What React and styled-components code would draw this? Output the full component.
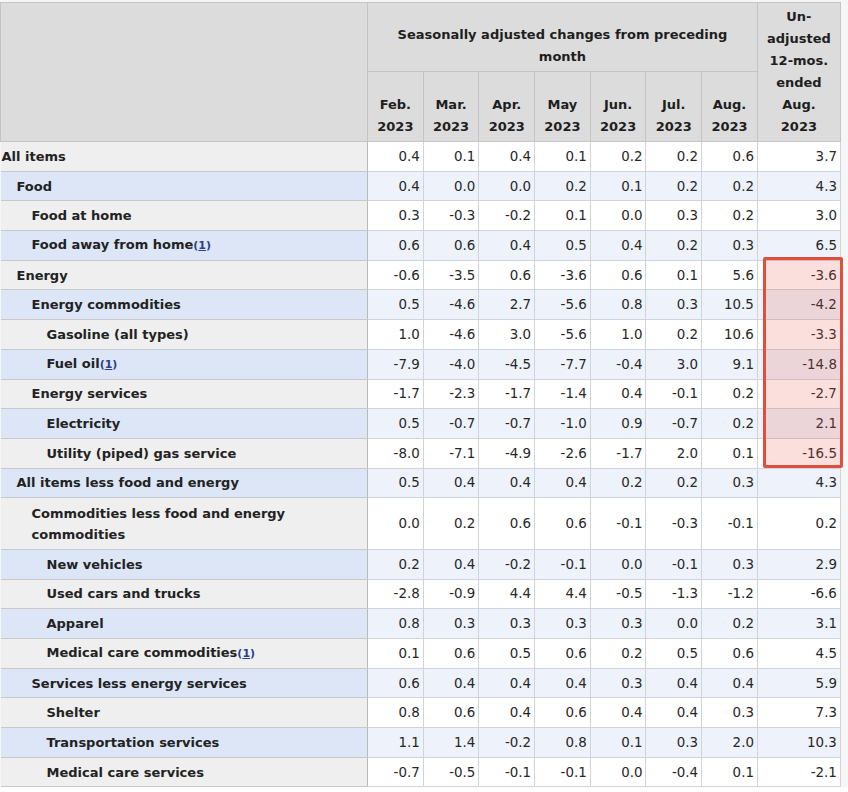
import React from "react";
import styled, { createGlobalStyle } from "styled-components";

const Global = createGlobalStyle`
  html, body { margin: 0; padding: 0; background: #ffffff; }
  body { font-family: "DejaVu Sans", Verdana, sans-serif; }
`;

const Wrap = styled.div`
  position: relative;
  width: 848px;
  padding-top: 2px;
  background: #f6f6f6;
`;

const Table = styled.table`
  border-collapse: collapse;
  table-layout: fixed;
  width: 840px;
  font-size: 13px;
  border-top: 1px solid #c9c9c9;
`;

const HeadCell = styled.th`
  background: #dcdcdc;
  color: #1e1e1e;
  font-weight: bold;
  font-size: 13px;
  line-height: 22px;
  text-align: center;
  vertical-align: bottom;
  padding: 0 2px 3px;
  border: 1px solid #c4c4c4;
  height: ${(p) => p.$h || "auto"};
`;

const Row = styled.tr`
  height: ${(p) => (p.$tall ? "51.7px" : "29.7px")};
`;

const Label = styled.th`
  text-align: left;
  font-weight: bold;
  color: #222;
  font-size: 13px;
  line-height: 21px;
  padding: 0 4px 0 ${(p) => 1 + p.$level * 15}px;
  background: ${(p) => (p.$alt ? "#dce6f7" : "#efefef")};
  border-top: 1px solid #c6c8cc;
  border-bottom: 1px solid #c6c8cc;
  border-right: 1px solid #b9b9b9;
  vertical-align: middle;
`;

const Value = styled.td`
  text-align: right;
  color: #262626;
  font-size: 13.4px;
  padding: 0 3px 0 0;
  background: ${(p) => (p.$alt ? "#eef3fb" : "#ffffff")};
  border: 1px solid #d0d4da;
  vertical-align: middle;
`;

const Foot = styled.span`
  font-size: 11px;
  font-weight: bold;
  color: #2d3e8c;
`;

const FootNum = styled.span`
  text-decoration: underline;
`;

const Highlight = styled.div`
  position: absolute;
  left: 763px;
  top: 257px;
  width: 74px;
  height: 205px;
  border: 3px solid #df4f3d;
  border-radius: 2px;
  background: rgba(232, 96, 80, 0.2);
  pointer-events: none;
`;

const months = ["Feb.", "Mar.", "Apr.", "May", "Jun.", "Jul.", "Aug."];

const rows = [
  [0, "All items", [0.4, 0.1, 0.4, 0.1, 0.2, 0.2, 0.6, 3.7]],
  [1, "Food", [0.4, 0.0, 0.0, 0.2, 0.1, 0.2, 0.2, 4.3]],
  [2, "Food at home", [0.3, -0.3, -0.2, 0.1, 0.0, 0.3, 0.2, 3.0]],
  [2, "Food away from home", [0.6, 0.6, 0.4, 0.5, 0.4, 0.2, 0.3, 6.5], true],
  [1, "Energy", [-0.6, -3.5, 0.6, -3.6, 0.6, 0.1, 5.6, -3.6]],
  [2, "Energy commodities", [0.5, -4.6, 2.7, -5.6, 0.8, 0.3, 10.5, -4.2]],
  [3, "Gasoline (all types)", [1.0, -4.6, 3.0, -5.6, 1.0, 0.2, 10.6, -3.3]],
  [3, "Fuel oil", [-7.9, -4.0, -4.5, -7.7, -0.4, 3.0, 9.1, -14.8], true],
  [2, "Energy services", [-1.7, -2.3, -1.7, -1.4, 0.4, -0.1, 0.2, -2.7]],
  [3, "Electricity", [0.5, -0.7, -0.7, -1.0, 0.9, -0.7, 0.2, 2.1]],
  [3, "Utility (piped) gas service", [-8.0, -7.1, -4.9, -2.6, -1.7, 2.0, 0.1, -16.5]],
  [1, "All items less food and energy", [0.5, 0.4, 0.4, 0.4, 0.2, 0.2, 0.3, 4.3]],
  [2, "Commodities less food and energy|commodities", [0.0, 0.2, 0.6, 0.6, -0.1, -0.3, -0.1, 0.2]],
  [3, "New vehicles", [0.2, 0.4, -0.2, -0.1, 0.0, -0.1, 0.3, 2.9]],
  [3, "Used cars and trucks", [-2.8, -0.9, 4.4, 4.4, -0.5, -1.3, -1.2, -6.6]],
  [3, "Apparel", [0.8, 0.3, 0.3, 0.3, 0.3, 0.0, 0.2, 3.1]],
  [3, "Medical care commodities", [0.1, 0.6, 0.5, 0.6, 0.2, 0.5, 0.6, 4.5], true],
  [2, "Services less energy services", [0.6, 0.4, 0.4, 0.4, 0.3, 0.4, 0.4, 5.9]],
  [3, "Shelter", [0.8, 0.6, 0.4, 0.6, 0.4, 0.4, 0.3, 7.3]],
  [3, "Transportation services", [1.1, 1.4, -0.2, 0.8, 0.1, 0.3, 2.0, 10.3]],
  [3, "Medical care services", [-0.7, -0.5, -0.1, -0.1, 0.0, -0.4, 0.1, -2.1]],
];

function LabelText({ text }) {
  const parts = text.split("|");
  return parts.map((p, i) => (
    <React.Fragment key={i}>
      {i > 0 && <br />}
      {p}
    </React.Fragment>
  ));
}

export default function App() {
  return (
    <>
      <Global />
      <Wrap>
        <Table>
          <colgroup>
            <col style={{ width: "367px" }} />
            {months.map((m) => (
              <col key={m} style={{ width: "55.7px" }} />
            ))}
            <col style={{ width: "83px" }} />
          </colgroup>
          <thead>
            <tr>
              <HeadCell rowSpan={2} />
              <HeadCell colSpan={7} $h="65px">
                Seasonally adjusted changes from preceding
                <br />
                month
              </HeadCell>
              <HeadCell rowSpan={2}>
                Un-
                <br />
                adjusted
                <br />
                12-mos.
                <br />
                ended
                <br />
                Aug.
                <br />
                2023
              </HeadCell>
            </tr>
            <tr>
              {months.map((m) => (
                <HeadCell key={m} $h="66px">
                  {m}
                  <br />
                  2023
                </HeadCell>
              ))}
            </tr>
          </thead>
          <tbody>
            {rows.map(([level, label, vals, foot], i) => {
              const alt = i % 2 === 1;
              return (
                <Row key={label} $tall={label.includes("|")}>
                  <Label $level={level} $alt={alt}>
                    <LabelText text={label} />
                    {foot && (
                      <Foot>
                        (<FootNum>1</FootNum>)
                      </Foot>
                    )}
                  </Label>
                  {vals.map((v, j) => (
                    <Value key={j} $alt={alt}>
                      {v.toFixed(1)}
                    </Value>
                  ))}
                </Row>
              );
            })}
          </tbody>
        </Table>
        <Highlight />
      </Wrap>
    </>
  );
}
